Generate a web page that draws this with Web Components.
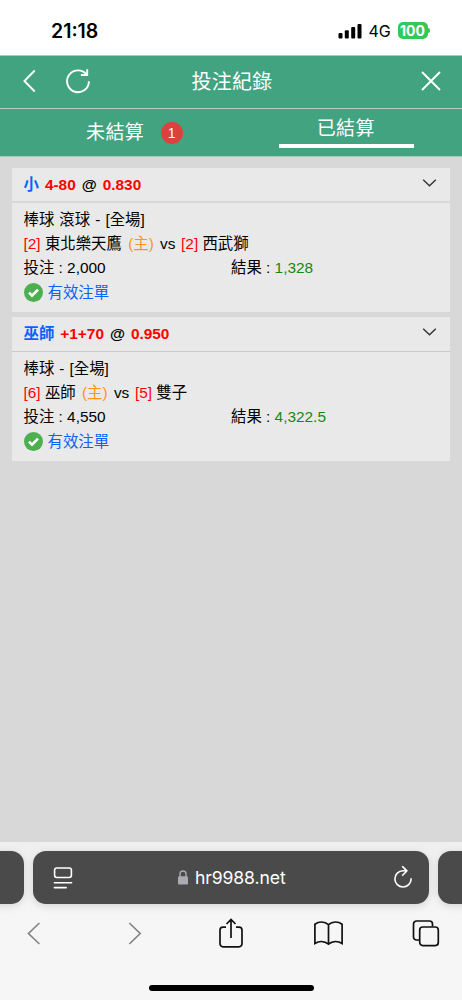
<!DOCTYPE html>
<html lang="zh-Hant">
<head>
<meta charset="utf-8">
<meta name="viewport" content="width=device-width">
<title>投注紀錄</title>
<style>
html,body{margin:0;height:100%;background:#d8d8d8;overflow:hidden}
body{font-family:"Liberation Sans","Noto Sans CJK TC",sans-serif}
</style>
</head>
<body>
<bet-app></bet-app>
<script>
const define = (name, html) => customElements.define(name, class extends HTMLElement {
  constructor() {
    super();
    const t = document.createElement('template');
    t.innerHTML = '<style>*{box-sizing:border-box}svg{display:block;flex:none;fill:none;overflow:visible}</style>' + html;
    this.attachShadow({mode: 'open'}).append(t.content.cloneNode(true));
  }
});

define('status-bar', `
<style>
:host{display:flex;height:55px;flex:none;background:#fff;align-items:center;padding:7px 32px 0 51px;font-family:Inter,sans-serif;color:#000}
.time{font-size:19.5px;font-weight:600;line-height:24px;letter-spacing:0}
.right{margin-left:auto;display:flex;align-items:center}
.net{font-size:16px;line-height:20px;margin:0 0 0 6.5px;width:23px;letter-spacing:-.1px;white-space:nowrap}
.bat{margin:-1px 0 0 6px;width:30px;height:17px;border-radius:5px;background:#34c759;color:#fff;font-size:14px;font-weight:700;line-height:17px;text-align:center;letter-spacing:.1px}
.cap{width:2px;height:5px;background:#34c759;border-radius:0 2px 2px 0;margin:-1px 0 0 .5px}
svg{margin-top:-1px}
</style>
<span class="time">21:18</span>
<div class="right">
<svg width="24" height="16" viewBox="0 0 24 16"><g fill="#000"><rect x="0.5" y="10" width="4" height="5.5" rx="1"/><rect x="6.8" y="7.3" width="4" height="8.2" rx="1"/><rect x="13.2" y="4" width="4" height="11.5" rx="1"/><rect x="19.5" y="1" width="4" height="14.5" rx="1"/></g></svg>
<span class="net">4G</span><span class="bat">100</span><i class="cap"></i>
</div>`);

define('title-bar', `
<style>
:host{display:flex;flex:none;height:54px;background:#42a381;border-top:1px solid #a3d1bf;border-bottom:1px solid #b9c9c2;align-items:center;justify-content:space-between;padding:0 20px 2px 22px;color:#fff}
.side{display:flex;width:89px;align-items:center}
.side.r{justify-content:flex-end}
h1{margin:1px 0 0;font-size:20px;font-weight:400;line-height:28px;letter-spacing:.2px;white-space:nowrap}
svg{stroke:#fff;stroke-width:1.9}
</style>
<div class="side">
<svg width="16" height="24" viewBox="0 0 16 24"><path d="M12.7 1.5 2.4 12l10.3 10.5"/></svg>
<svg width="26" height="26" viewBox="0 0 26 26" style="margin-left:26.5px"><path d="M23.900 13.200A10.900 10.900 0 1 1 21.300 6.200M22.200 1.300V7H15.900"/></svg>
</div>
<h1>投注紀錄</h1>
<div class="side r"><svg width="22" height="22" viewBox="0 0 22 22"><path d="m2 2 18 18M20 2 2 20"/></svg></div>`);

define('bet-tabs', `
<style>
:host{display:grid;grid-template-columns:1fr 1fr;flex:none;height:48px;background:#42a381;border-bottom:1px solid #a8cabd;color:#fff;font-size:19px;line-height:28px;letter-spacing:.4px}
.a{display:flex;align-items:center;padding-left:86px}
.b{display:flex;justify-content:center;padding-top:6px}
.b span{width:135px;height:33px;padding-right:1.5px;text-align:center;border-bottom:4px solid #fff}
i{font-style:normal;width:22px;height:22px;border-radius:50%;background:#db423c;font-size:14px;line-height:22px;text-align:center;letter-spacing:0;margin:1px 0 0 16.5px}
</style>
<div class="a"><span>未結算</span><i>1</i></div>
<div class="b"><span>已結算</span></div>`);

define('bet-card', `
<style>
:host{display:block;background:#e9e9e9;height:144px;font-size:15.4px;line-height:24px;color:#000}
header{display:flex;align-items:center;height:35px;border-bottom:2px solid #d8d8d8;padding:0 13px 0 11.500px;font-weight:700;white-space:nowrap}
:host([thin]) header{border-bottom:1px solid #cbcbcb;padding-bottom:1px}
header svg{margin:-3px 0 0 auto;stroke:#333;stroke-width:1.4}
.body{padding:5px 11.500px 0}
.row{display:flex;height:24px;white-space:nowrap}
.row>*{flex:0 0 207.5px}
.ok{display:flex;align-items:center;gap:5px;height:25px;color:#0a62fa}
</style>
<header><slot name="pick"></slot><svg width="15" height="10" viewBox="0 0 15 10"><path d="m1.2 1.7 6.3 6 6.3-6"/></svg></header>
<div class="body">
<div class="row"><slot name="game"></slot></div>
<div class="row"><slot name="teams"></slot></div>
<div class="row"><span><slot name="stake"></slot></span><span><slot name="result"></slot></span></div>
<div class="ok"><svg width="19" height="19" viewBox="0 0 19 19"><circle cx="9.5" cy="9.5" r="9.5" fill="#4caf50"/><path d="m5 9.7 3 3 6-6" stroke="#fff" stroke-width="2.6"/></svg>有效注單</div>
</div>`);

define('browser-bar', `
<style>
:host{display:flex;flex-direction:column;flex:none;height:158px;background:linear-gradient(#efefef,#f6f6f6 75px);overflow:hidden}
.tabs{display:flex;justify-content:center;gap:9.5px;padding-top:9px}
.t{flex:none;width:395.5px;height:53px;border-radius:13px;background:#4a4a4a;box-shadow:0 2px 9px #0002;color:#fff;display:flex;align-items:center;justify-content:space-between;padding:0 16px 0 20px}
.url{display:flex;align-items:center;font:17.6px/24px Inter,sans-serif;letter-spacing:-.1px;gap:6.5px;margin-right:2px}
nav{display:flex;justify-content:space-between;padding:11px 21px 0 19px;height:81px}
nav svg{stroke:#111;stroke-width:1.7}
nav svg.dim{stroke:#858585}
.home{width:165px;height:6px;border-radius:3px;background:#000;margin:-.5px auto 0}
</style>
<div class="tabs"><div class="t"></div><div class="t">
<svg width="20" height="24" viewBox="0 0 20 24" stroke="#fff" stroke-width="1.6" stroke-linecap="round"><rect x="1.6" y="2" width="16.8" height="9.5" rx="2.2"/><path d="M1.4 16.7H18.6M1.4 21.6H13.2"/></svg>
<div class="url"><svg width="10" height="15" viewBox="0 0 10 15"><path d="M2 7V4a3 3 0 0 1 6 0v3" stroke="#aaaab0" stroke-width="1.4"/><rect y="6.3" width="10" height="8.2" rx="1.3" fill="#aaaab0"/></svg><span>hr9988.net</span></div>
<svg width="20" height="24" viewBox="0 0 20 24" stroke="#fff" stroke-width="1.6" stroke-linecap="round" stroke-linejoin="round"><path d="M18.1 12.900a8.1 8.1 0 1 1-8.1-8.1h4M9.6 .7 14 4.8 9.6 9.200"/></svg>
</div><div class="t"></div></div>
<nav>
<svg class="dim" width="30" height="36" viewBox="-4.7 0 30 36"><path d="M15.7 8 4.8 18.5 15.7 29"/></svg>
<svg class="dim" width="30" height="36" viewBox="-8 0 30 36"><path d="M4.3 8 15.2 18.5 4.3 29"/></svg>
<svg width="30" height="36" viewBox="-3 0 30 36"><path d="M8 12.2H5A3 3 0 0 0 2 15.2V28.8A3 3 0 0 0 5 31.8H21A3 3 0 0 0 24 28.8V15.2A3 3 0 0 0 21 12.2H18M13 23V4.5M8.5 9 13 4.5 17.5 9"/></svg>
<svg width="30" height="36" viewBox="-0.5 0 30 36"><path d="M15 9.7C11 6.2 5.5 6.2 1.4 9.2V28.5C5.5 26 11 26 15 29.2 19 26 24.5 26 28.6 28.5V9.2C24.5 6.2 19 6.2 15 9.7ZM15 9.7V29"/></svg>
<svg width="30" height="36" viewBox="0 0 30 36"><path d="M8 25H5.5A3 3 0 0 1 2.5 22V9A3 3 0 0 1 5.5 6H18.5A3 3 0 0 1 21.5 9V11.5"/><rect x="8.7" y="12" width="18.6" height="18.6" rx="3"/></svg>
</nav>
<div class="home"></div>`);

define('bet-app', `
<style>
:host{display:flex;flex-direction:column;height:1000px;width:462px;background:#d8d8d8}
main{flex:1;padding:11px 12px 0;display:flex;flex-direction:column;gap:5px}
.b{color:#0a62fa}.r{color:#f00}.o{color:#ff9511}.g{color:#128a12}
[slot=pick]{word-spacing:1.700px}
[slot=game]{word-spacing:.800px}
.o{margin:0 2px}
.v{margin-right:1.300px}
</style>
<status-bar></status-bar><title-bar></title-bar><bet-tabs></bet-tabs>
<main>
<bet-card>
<span slot="pick"><span class="b">小</span> <span class="r">4-80</span> @ <span class="r">0.830</span></span>
<span slot="game">棒球 滾球 - [全場]</span>
<span slot="teams"><span class="r">[2]</span> 東北樂天鷹 <span class="o">(主)</span> <span class="v">vs</span> <span class="r">[2]</span> 西武獅</span>
<span slot="stake">投注 : 2,000</span>
<span slot="result">結果 : <span class="g">1,328</span></span>
</bet-card>
<bet-card thin>
<span slot="pick"><span class="b">巫師</span> <span class="r">+1+70</span> @ <span class="r">0.950</span></span>
<span slot="game">棒球 - [全場]</span>
<span slot="teams"><span class="r">[6]</span> 巫師 <span class="o">(主)</span> <span class="v">vs</span> <span class="r">[5]</span> 雙子</span>
<span slot="stake">投注 : 4,550</span>
<span slot="result">結果 : <span class="g">4,322.5</span></span>
</bet-card>
</main>
<browser-bar></browser-bar>`);
</script>
</body>
</html>
